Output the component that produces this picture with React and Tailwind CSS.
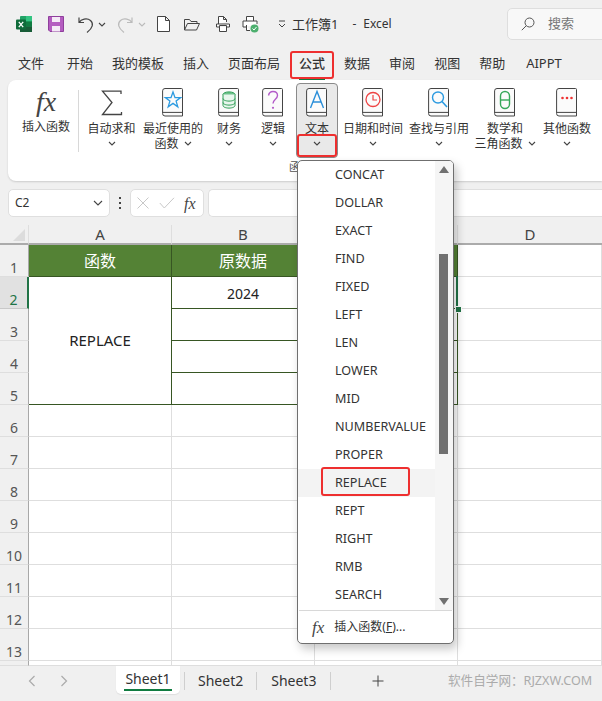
import React from "react";

const font = "font-['Noto_Sans','Noto_Sans_CJK_SC',sans-serif]";

const Chev = ({ className = "" }) => (
  <svg width="8" height="5" viewBox="0 0 8 5" className={className}>
    <path d="M1 1l3 3 3-3" fill="none" stroke="#444" strokeWidth="1.1" />
  </svg>
);

// the little book all the function category icons sit on
const Book = ({ children }) => (
  <svg width="22" height="29" viewBox="0 0 22 29" className="block">
    <path d="M3 .5h16.5a1 1 0 0 1 1 1v26.5H3a2.4 2.4 0 0 1-2.4-2.4V2.9A2.4 2.4 0 0 1 3 .5z" fill="#fbfbfb" stroke="#444" strokeWidth="1" />
    <path d="M.8 24.4h19.7" stroke="#444" strokeWidth="1" />
    {children}
  </svg>
);

const FxIcon = ({ size = 26 }) => (
  <span className="font-['Liberation_Serif',serif] italic text-[#444] leading-none" style={{ fontSize: size }}>
    fx
  </span>
);

const icons = {
  sum: (
    <svg width="22" height="26" viewBox="0 0 22 26">
      <path d="M20 4V1.2H1.5L11 12.5 1.5 24.5H20.5V22" fill="none" stroke="#444" strokeWidth="1.3" />
    </svg>
  ),
  star: (
    <Book>
      <path d="M11 4l2 5.6h5.7l-4.6 3.5 1.7 5.7L11 15.4l-4.8 3.4 1.7-5.7-4.6-3.5H9z" fill="none" stroke="#2b9ae0" strokeWidth="1.3" />
    </Book>
  ),
  db: (
    <Book>
      <ellipse cx="11" cy="6.5" rx="6" ry="2.6" fill="#6cc18a" stroke="#2f9e56" />
      <path d="M5 6.5v11c0 1.5 2.7 2.6 6 2.6s6-1.1 6-2.6v-11M5 10.5c0 1.5 2.7 2.6 6 2.6s6-1.1 6-2.6M5 14.5c0 1.5 2.7 2.6 6 2.6s6-1.1 6-2.6" fill="#e8f6ed" stroke="#2f9e56" />
    </Book>
  ),
  question: (
    <Book>
      <path d="M6.5 7.5C7 4.8 8.8 3.5 11 3.5c2.6 0 4.5 1.7 4.5 4 0 3.6-4.5 3.8-4.5 8" fill="none" stroke="#b35cc9" strokeWidth="1.4" />
      <circle cx="11" cy="19.8" r="1.1" fill="#b35cc9" />
    </Book>
  ),
  text: (
    <Book>
      <path d="M4.5 20L11 3.5 17.5 20M7 14h8" fill="none" stroke="#2b8fd9" strokeWidth="1.4" />
    </Book>
  ),
  clock: (
    <Book>
      <circle cx="11" cy="11.5" r="7" fill="none" stroke="#ee4444" strokeWidth="1.3" />
      <path d="M11 7v5h4" fill="none" stroke="#ee4444" strokeWidth="1.2" />
    </Book>
  ),
  search: (
    <Book>
      <circle cx="10" cy="9.5" r="5.5" fill="none" stroke="#2b9ae0" strokeWidth="1.4" />
      <path d="M14 13.5l5 5.5" stroke="#2b9ae0" strokeWidth="1.6" />
    </Book>
  ),
  theta: (
    <Book>
      <rect x="6.5" y="3.5" width="9" height="17" rx="4.5" fill="none" stroke="#37a85a" strokeWidth="1.4" />
      <path d="M6.5 12h9" stroke="#37a85a" strokeWidth="1.4" />
    </Book>
  ),
  dots: (
    <Book>
      <circle cx="6.5" cy="10" r="1.3" fill="#ee3333" />
      <circle cx="11" cy="10" r="1.3" fill="#ee3333" />
      <circle cx="15.5" cy="10" r="1.3" fill="#ee3333" />
    </Book>
  ),
};

const ribbonBtns = [
  { w: "w-[57px]", icon: "sum", lines: ["自动求和"] },
  { w: "w-[66px]", icon: "star", lines: ["最近使用的", "函数"] },
  { w: "w-[46px]", icon: "db", lines: ["财务"] },
  { w: "w-[42px]", icon: "question", lines: ["逻辑"] },
  { w: "w-[42px] ml-[2px]", icon: "text", lines: ["文本"], active: true },
  { w: "w-[70px]", icon: "clock", lines: ["日期和时间"] },
  { w: "w-[62px]", icon: "search", lines: ["查找与引用"] },
  { w: "w-[70px]", icon: "theta", lines: ["数学和", "三角函数"] },
  { w: "w-[54px]", icon: "dots", lines: ["其他函数"] },
];

const RibbonBtn = ({ btn }) => (
  <div
    className={`${btn.w} h-[75px] flex flex-col items-center pt-[4px] rounded-[4px] border ${
      btn.active ? "bg-[#e9e9e9] border-[#8a8a8a]" : "border-transparent"
    }`}
  >
    <div className="h-[29px] flex items-center justify-center">{icons[btn.icon]}</div>
    <div className="mt-[4px] text-[12px] leading-[15px] text-[#333] text-center whitespace-nowrap">{btn.lines[0]}</div>
    {btn.lines[1] ? (
      <div className="text-[12px] leading-[15px] text-[#333] whitespace-nowrap flex items-center gap-[5px]">
        {btn.lines[1]}
        <Chev />
      </div>
    ) : (
      <div className="h-[15px] flex items-center">
        <Chev />
      </div>
    )}
  </div>
);

const TitleBar = () => (
  <div className="h-[48px] flex items-center relative shrink-0">
    <div className="ml-[16px] w-[16px] h-[16px]">
      <svg width="16" height="16" viewBox="0 0 16 16">
        <rect x="4" y="0" width="12" height="16" rx="1" fill="#21a366" />
        <rect x="10" y="0" width="6" height="5.5" fill="#33c481" />
        <rect x="10" y="5.5" width="6" height="5" fill="#107c41" />
        <rect x="4" y="10.5" width="12" height="5.5" fill="#185c37" />
        <rect x="0" y="3.5" width="10" height="10" rx="1" fill="#0f6b3a" />
        <path d="M2.8 5.8l4.4 5.4M7.2 5.8l-4.4 5.4" stroke="#fff" strokeWidth="1.3" />
      </svg>
    </div>
    <svg width="16" height="16" viewBox="0 0 16 16" className="ml-[16px]">
      <path d="M.5.5h15v15H2L.5 14z" fill="#b45cc0" stroke="#8f3f9c" />
      <rect x="4" y="1" width="8" height="5" fill="#f4e9f6" />
      <rect x="4" y="10" width="8" height="5.5" fill="#f4e9f6" />
    </svg>
    <svg width="16" height="17" viewBox="0 0 16 17" className="ml-[14px]">
      <path d="M1 1.5v5h5M1.2 6.5C3 3 9 1.5 12.5 4.5c3.3 3 2.5 7.5-3.5 12" fill="none" stroke="#444" strokeWidth="1.2" />
    </svg>
    <Chev className="ml-[4px]" />
    <svg width="16" height="17" viewBox="0 0 16 17" className="ml-[11px]">
      <path d="M15 1.5v5h-5M14.8 6.5C13 3 7 1.5 3.5 4.5c-3.3 3-2.5 7.5 3.5 12" fill="none" stroke="#bbb" strokeWidth="1.2" />
    </svg>
    <svg width="8" height="5" viewBox="0 0 8 5" className="ml-[5px]">
      <path d="M1 1l3 3 3-3" fill="none" stroke="#bbb" strokeWidth="1.1" />
    </svg>
    <svg width="13" height="16" viewBox="0 0 13 16" className="ml-[11px]">
      <path d="M.5.5h8l4 4v11H.5zM8.5.5v4h4" fill="#fff" stroke="#444" />
    </svg>
    <svg width="16" height="13" viewBox="0 0 16 13" className="ml-[14px]">
      <path d="M.5 12V1.5h5l1.5 2h6V6M.5 12l3-6.5h12L12.5 12z" fill="none" stroke="#444" />
    </svg>
    <svg width="16" height="16" viewBox="0 0 16 16" className="ml-[15px]">
      <path d="M3.5 8V.5h5l3 3V6M8.5.5v3h3" fill="#fff" stroke="#444" />
      <path d="M4.5 11H1.5V8H14.5V11H11.5M4.5 9.5v6h7v-6z" fill="#fff" stroke="#444" />
    </svg>
    <svg width="17" height="17" viewBox="0 0 17 17" className="ml-[11px]">
      <path d="M4.5 5V.5h7V5M4 11H1V5h14v3M4.5 9v5.5H8" fill="#fff" stroke="#444" />
      <circle cx="12.5" cy="12.5" r="4" fill="#4caf6e" />
      <path d="M10.5 12.5l1.5 1.5 2.5-3" fill="none" stroke="#fff" strokeWidth="1" />
    </svg>
    <svg width="8" height="8" viewBox="0 0 8 8" className="ml-[19px]">
      <path d="M1 1h6M1 4l3 3 3-3" fill="none" stroke="#444" strokeWidth="1" />
    </svg>
    <div className="absolute left-[292px] top-[15px] leading-[18px] text-[#333] whitespace-nowrap flex items-center text-[12px]">
      <span className="text-[13px]">工作簿1</span>
      <span className="ml-[14px]">-</span>
      <span className="ml-[7px]">Excel</span>
    </div>
    <div className="absolute left-[507px] top-[8px] w-[110px] h-[32px] bg-[#f8f8f8] border border-[#dedede] rounded-[5px] flex items-center">
      <svg width="14" height="14" viewBox="0 0 14 14" className="ml-[13px]">
        <circle cx="8.5" cy="5.5" r="4.5" fill="none" stroke="#555" />
        <path d="M5.2 8.8L.8 13.2" stroke="#555" />
      </svg>
      <span className="ml-[13px] text-[13px] text-[#777]">搜索</span>
    </div>
  </div>
);

const Tabs = () => (
  <div className="h-[32px] flex items-center pl-[18px] gap-[19px] text-[13px] text-[#333] shrink-0 relative">
    <span>文件</span>
    <span className="ml-[4px]">开始</span>
    <span>我的模板</span>
    <span>插入</span>
    <span>页面布局</span>
    <span className="relative font-medium">
      公式
      <span className="absolute left-0 right-0 top-[24px] h-[2px] bg-[#107c41]" />
    </span>
    <span>数据</span>
    <span>审阅</span>
    <span>视图</span>
    <span>帮助</span>
    <span className="ml-[2px]">AIPPT</span>
  </div>
);

const Ribbon = () => (
  <div className="ml-[8px] h-[101px] bg-white rounded-l-[8px] shadow-[0_1px_2px_rgba(0,0,0,0.15)] flex items-start pt-[3px] pl-[8px] relative shrink-0">
    <div className="w-[62px] h-[75px] flex flex-col items-center pt-[4px] pr-[2px]">
      <div className="h-[29px] flex items-center">
        <FxIcon size={28} />
      </div>
      <div className="mt-[3px] text-[12px] leading-[15px] text-[#333]">插入函数</div>
    </div>
    <div className="w-px h-[62px] bg-[#d8d8d8] mt-[7px] mr-[4px]" />
    {ribbonBtns.map((b) => (
      <RibbonBtn key={b.icon} btn={b} />
    ))}
    <span className="absolute left-[281px] top-[79px] text-[11px] leading-[15px] text-[#555]">函数库</span>
  </div>
);

const FormulaBar = () => (
  <div className="h-[28px] mt-[8px] ml-[8px] flex items-stretch shrink-0">
    <div className="w-[102px] bg-white border border-[#dfdfdf] rounded-[5px] flex items-center justify-between pl-[6px] pr-[6px] text-[12px] text-[#333]">
      C2
      <svg width="10" height="6" viewBox="0 0 10 6">
        <path d="M1 1l4 4 4-4" fill="none" stroke="#444" strokeWidth="1.1" />
      </svg>
    </div>
    <div className="w-[20px] flex flex-col items-center justify-center gap-[3px]">
      <span className="w-[2px] h-[2px] bg-[#444]" />
      <span className="w-[2px] h-[2px] bg-[#444]" />
      <span className="w-[2px] h-[2px] bg-[#444]" />
    </div>
    <div className="w-[74px] bg-white border border-[#dfdfdf] rounded-[5px] flex items-center pl-[6px]">
      <svg width="12" height="12" viewBox="0 0 12 12">
        <path d="M.5.5l11 11M11.5.5l-11 11" stroke="#c8c8c8" />
      </svg>
      <svg width="16" height="12" viewBox="0 0 16 12" className="ml-[10px]">
        <path d="M.8 6l4.5 5L15 .8" fill="none" stroke="#c8c8c8" />
      </svg>
      <span className="ml-[9px]">
        <FxIcon size={16} />
      </span>
    </div>
    <div className="flex-1 ml-[4px] bg-white border border-r-0 border-[#dfdfdf] rounded-l-[5px]" />
  </div>
);

const rowHead = "flex items-end justify-center text-[14px] leading-[16px] text-[#555] border-r border-r-[#a8a8a8] border-b border-b-[#dedede] bg-[#f0f0f0]";
const colHead = "flex items-center justify-center text-[15px] leading-[18px] text-[#444] border-r border-r-[#dedede] border-b-2 border-b-[#ababab] bg-[#f0f0f0]";
const gridCell = "border-r border-b border-[#dedede] bg-white";
const darkCell = "bg-white border-r border-b border-[#375623] flex items-center justify-center text-[14px] text-[#222]";
const greenCell = "bg-[#548235] border-r border-b border-[#375623] flex items-center justify-center text-[16px] text-white";

const Sheet = () => (
  <div className="mt-[8px] grid grid-cols-[29px_143px_143px_143px_144px] grid-rows-[20px_repeat(12,32px)_32px] h-[441px] overflow-hidden relative shrink-0">
    <div className="bg-[#f0f0f0] border-r border-r-[#dedede] border-b-2 border-b-[#ababab] relative overflow-hidden">
      <svg width="13" height="13" viewBox="0 0 13 13" className="absolute left-[13px] top-[4px]">
        <path d="M12 0v12H0z" fill="#dcdcdc" />
      </svg>
    </div>
    <div className={colHead}>A</div>
    <div className={colHead}>B</div>
    <div className={colHead}>C</div>
    <div className={`${colHead} border-r-0`}>D</div>

    <div className={rowHead}>1</div>
    <div className={greenCell}>函数</div>
    <div className={greenCell}>原数据</div>
    <div className={greenCell} />
    <div className={gridCell} />

    <div className="flex items-end justify-center text-[14px] leading-[16px] text-[#217346] bg-[#e1e1e1] border-r-2 border-r-[#217346] border-b border-b-[#c8c8c8]">2</div>
    <div className={`${darkCell} row-span-4 text-[15px]`}>REPLACE</div>
    <div className={`${darkCell} pt-[1px]`}>2024</div>
    <div className={darkCell} />
    <div className={gridCell} />

    <div className={rowHead}>3</div>
    <div className={darkCell} />
    <div className={darkCell} />
    <div className={gridCell} />

    <div className={rowHead}>4</div>
    <div className={darkCell} />
    <div className={darkCell} />
    <div className={gridCell} />

    <div className={rowHead}>5</div>
    <div className={darkCell} />
    <div className={darkCell} />
    <div className={gridCell} />

    {[6, 7, 8, 9, 10, 11, 12, 13, 14].map((n) => (
      <React.Fragment key={n}>
        <div className={rowHead}>{n < 14 ? n : ""}</div>
        <div className={gridCell} />
        <div className={gridCell} />
        <div className={gridCell} />
        <div className={gridCell} />
      </React.Fragment>
    ))}
    {/* selected cell edge and fill handle */}
    <div className="absolute left-[456px] top-[51px] w-[2px] h-[32px] bg-[#217346]" />
    <div className="absolute left-[455px] top-[81px] w-[5px] h-[5px] bg-[#217346] border border-white box-content" />
  </div>
);

const SheetTabs = () => (
  <div className="h-[29px] flex items-center text-[14px] text-[#333] relative shrink-0">
    <svg width="8" height="12" viewBox="0 0 8 12" className="ml-[28px]">
      <path d="M6.5 1L1.5 6l5 5" fill="none" stroke="#aaa" strokeWidth="1.2" />
    </svg>
    <svg width="8" height="12" viewBox="0 0 8 12" className="ml-[24px]">
      <path d="M1.5 1l5 5-5 5" fill="none" stroke="#aaa" strokeWidth="1.2" />
    </svg>
    <div className="ml-[48px] w-[64px] h-[28px] self-start bg-white rounded-b-[5px] shadow-[0_1px_1px_rgba(0,0,0,0.08)] flex flex-col items-center relative">
      <span className="leading-[26px]">Sheet1</span>
      <span className="absolute left-[8px] right-[8px] top-[23px] h-[2px] bg-[#107c41]" />
    </div>
    <span className="ml-[4px] w-px h-[18px] bg-[#cfcfcf]" />
    <span className="ml-[13px]">Sheet2</span>
    <span className="ml-[13px] w-px h-[18px] bg-[#cfcfcf]" />
    <span className="ml-[14px]">Sheet3</span>
    <span className="ml-[14px] w-px h-[18px] bg-[#cfcfcf]" />
    <svg width="12" height="12" viewBox="0 0 12 12" className="ml-[41px]">
      <path d="M6 .5v11M.5 6h11" stroke="#444" strokeWidth="1" />
    </svg>
    <span className="absolute left-[448px] top-[6px] text-[12.6px] leading-[18px] text-[#ababab] whitespace-nowrap">软件自学网：RJZXW.COM</span>
  </div>
);

const fnList = ["CONCAT", "DOLLAR", "EXACT", "FIND", "FIXED", "LEFT", "LEN", "LOWER", "MID", "NUMBERVALUE", "PROPER", "REPLACE", "REPT", "RIGHT", "RMB", "SEARCH"];

const FuncMenu = () => (
  <div className="absolute left-[297px] top-[160px] w-[157px] h-[484px] bg-white border border-[#6f6f6f] rounded-[5px] shadow-[3px_5px_10px_rgba(0,0,0,0.22)] flex flex-col overflow-hidden text-[#333]">
    <div className="flex h-[449px]">
      <div className="flex-1">
        {fnList.map((f) => (
          <div key={f} className={`h-[28px] pl-[37px] flex items-center text-[12.6px] ${f === "REPLACE" ? "bg-[#f3f3f3]" : ""}`}>
            {f}
          </div>
        ))}
      </div>
      <div className="w-[18px] bg-[#f5f5f5] flex flex-col items-center justify-between py-[5px] relative">
        <svg width="10" height="7" viewBox="0 0 10 7">
          <path d="M5 0l5 7H0z" fill="#707070" />
        </svg>
        <div className="absolute left-[4px] top-[93px] w-[9px] h-[200px] bg-[#707070]" />
        <svg width="10" height="7" viewBox="0 0 10 7">
          <path d="M5 7L0 0h10z" fill="#707070" />
        </svg>
      </div>
    </div>
    <div className="mx-[1px] h-[1px] bg-[#d8d8d8]" />
    <div className="flex-1 flex items-center pl-[14px] text-[12px]">
      <FxIcon size={17} />
      <span className="ml-[10px]">
        插入函数(<span className="underline">F</span>)...
      </span>
    </div>
  </div>
);

const App = () => {
  return (
    <div className={`${font} relative w-[602px] h-[701px] overflow-hidden bg-[#f0f0f0] flex flex-col`}>
      <TitleBar />
      <Tabs />
      <Ribbon />
      <FormulaBar />
      <Sheet />
      <SheetTabs />
      <FuncMenu />
      {/* red annotation boxes */}
      <div className="absolute left-[290px] top-[51px] w-[44px] h-[28px] border-2 border-[#ee2f2f] rounded-[3px]" />
      <div className="absolute left-[297px] top-[134px] w-[40px] h-[23px] border-2 border-[#ee2f2f] rounded-[3px]" />
      <div className="absolute left-[321px] top-[467px] w-[89px] h-[29px] border-2 border-[#ee2f2f] rounded-[3px]" />
    </div>
  );
};

export default App;
